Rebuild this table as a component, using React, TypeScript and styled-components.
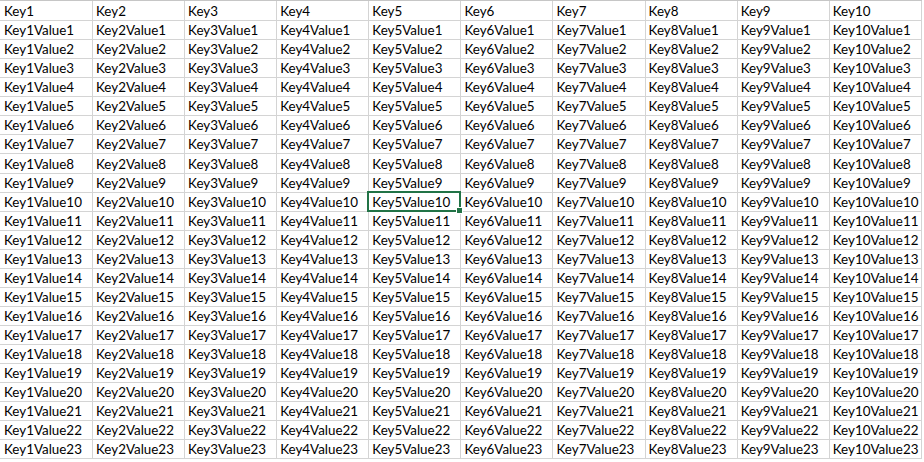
import React from "react";
import styled, { createGlobalStyle } from "styled-components";

const Global = createGlobalStyle`
  html, body { margin: 0; padding: 0; background: #ffffff; }
  body { overflow: hidden; }
`;

const Sheet = styled.div`
  display: grid;
  grid-template-columns: 93px repeat(9, 92.1px);
  grid-template-rows: 20px;
  grid-auto-rows: 19.07px;
  border-top: 1px solid #c6c6c6;
  width: max-content;
  font-family: "Lato", "Open Sans", sans-serif;
  font-size: 13.4px;
  color: #000000;
`;

const Cell = styled.div<{ $first?: boolean }>`
  position: relative;
  box-sizing: border-box;
  border-right: 1px solid #d4d4d4;
  border-bottom: 1px solid #d4d4d4;
  padding-left: ${(p) => (p.$first ? "4px" : "3px")};
  display: flex;
  align-items: flex-end;
  padding-bottom: 1px;
  white-space: nowrap;
  overflow: visible;
  line-height: 16px;
`;

const Selection = styled.div`
  position: absolute;
  left: -2px;
  top: -2px;
  right: -1px;
  bottom: -1px;
  border: 2px solid #217346;
  pointer-events: none;
  z-index: 2;
`;

const Handle = styled.div`
  position: absolute;
  right: -4px;
  bottom: -4px;
  width: 5px;
  height: 5px;
  background: #217346;
  border: 1px solid #ffffff;
  z-index: 3;
`;

const COLS = 10;
const ROWS = 23;

export default function App() {
  const cells: React.ReactNode[] = [];
  for (let c = 1; c <= COLS; c++) {
    cells.push(
      <Cell key={`h${c}`} $first={c === 1}>
        {`Key${c}`}
      </Cell>
    );
  }
  for (let r = 1; r <= ROWS; r++) {
    for (let c = 1; c <= COLS; c++) {
      const selected = r === 10 && c === 5;
      cells.push(
        <Cell key={`${r}-${c}`} $first={c === 1}>
          {`Key${c}Value${r}`}
          {selected && (
            <Selection>
              <Handle />
            </Selection>
          )}
        </Cell>
      );
    }
  }
  return (
    <>
      <Global />
      <Sheet>{cells}</Sheet>
    </>
  );
}
